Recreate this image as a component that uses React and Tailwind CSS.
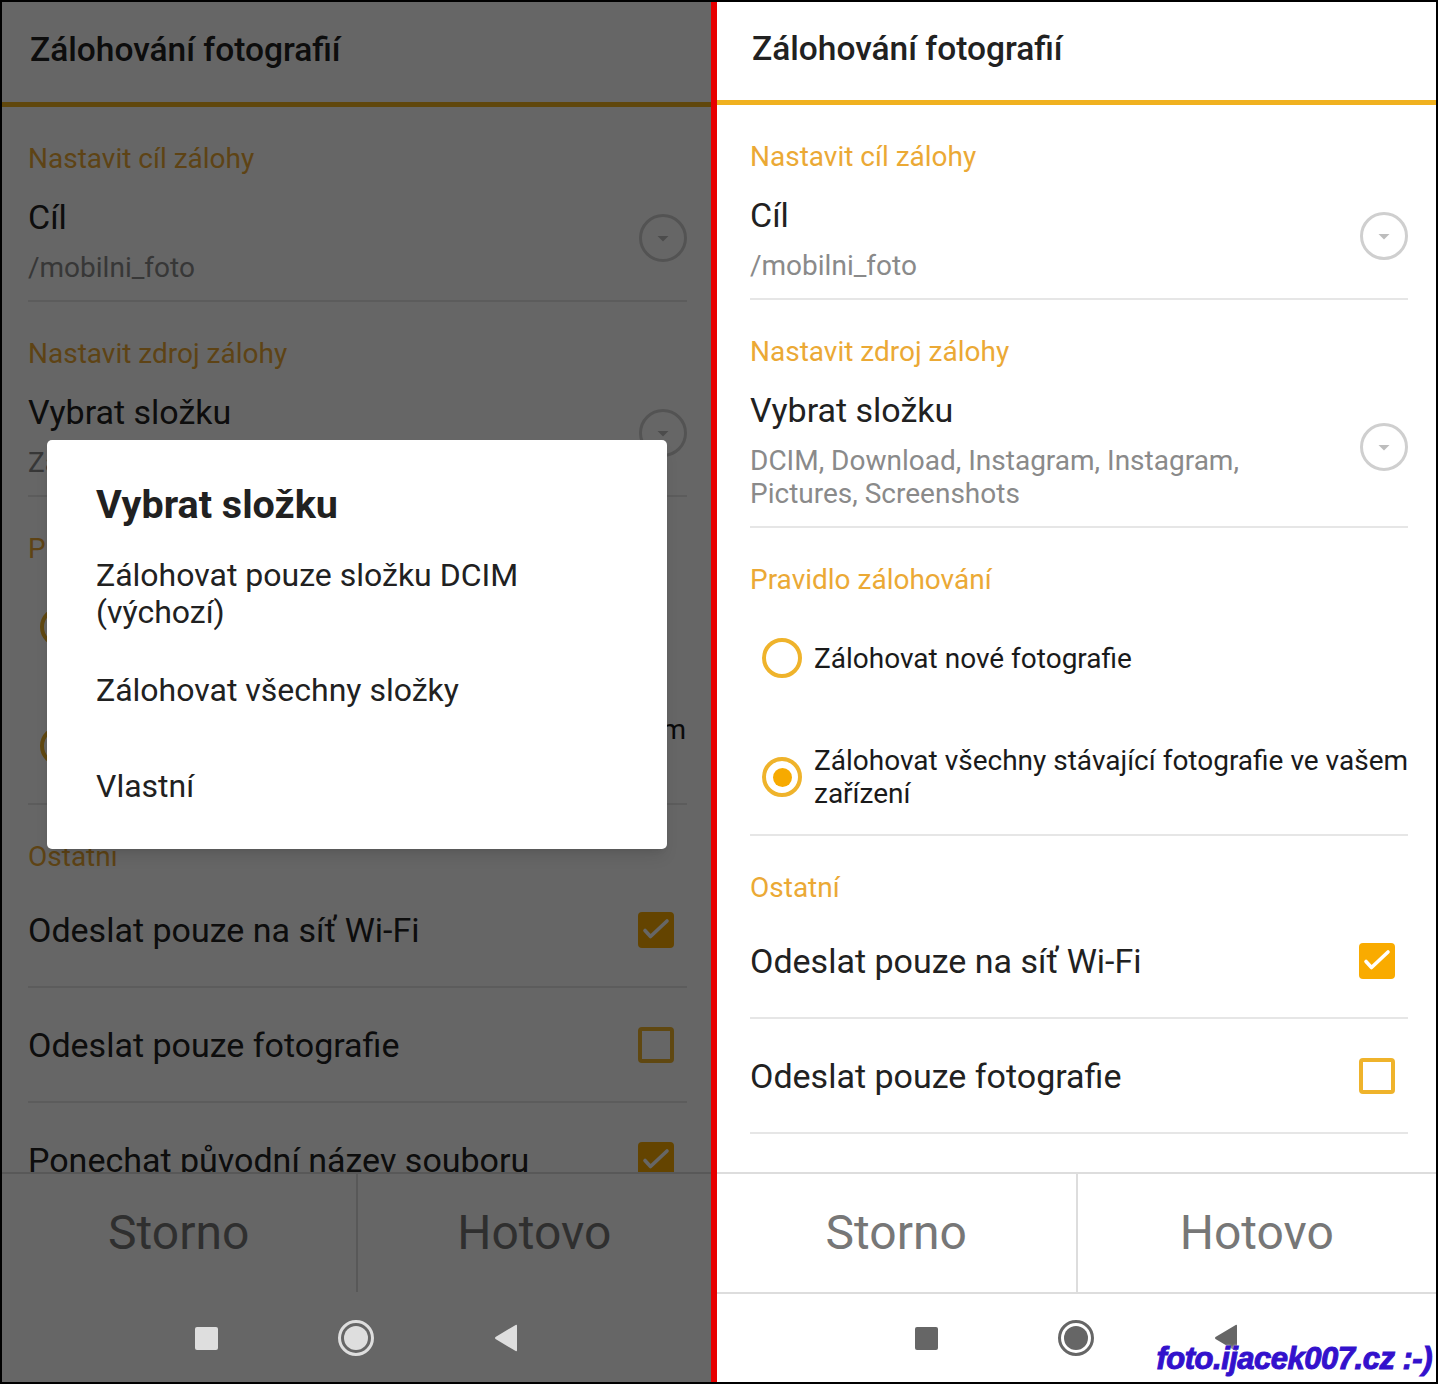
import React from 'react';

function DropCircle() {
  return (
    <svg width="48" height="48" viewBox="0 0 48 48" className="shrink-0">
      <circle cx="24" cy="24" r="22.5" fill="none" stroke="#cfcfcf" strokeWidth="3" />
      <path d="M18.5 22h11l-5.5 5.5z" fill="#bdbdbd" />
    </svg>
  );
}

function Radio({ checked }) {
  return (
    <span className="ml-[12px] flex h-[40px] w-[40px] shrink-0 items-center justify-center rounded-full border-[4px] border-[#efb32b]">
      {checked && <span className="h-[19px] w-[19px] rounded-full bg-[#f7aa00]" />}
    </span>
  );
}

function Checkbox({ checked }) {
  if (!checked) {
    return <span className="mr-[13px] h-[36px] w-[36px] shrink-0 rounded-[4px] border-[4px] border-[#efb32b]" />;
  }
  return (
    <span className="mr-[13px] flex h-[36px] w-[36px] shrink-0 items-center justify-center rounded-[4px] bg-[#f9ab00]">
      <svg width="36" height="36" viewBox="0 0 36 36">
        <path d="M7 18.5l5.5 6L29 9" fill="none" stroke="white" strokeWidth="3.6" strokeLinecap="round" strokeLinejoin="round" />
      </svg>
    </span>
  );
}

function Category({ children }) {
  return <div className="pt-[36px] text-[28px] leading-[32px] text-[#eba935]">{children}</div>;
}

function Divider() {
  return <div className="h-[2px] bg-[#e6e6e6]" />;
}

function PrefRow({ title, children }) {
  return (
    <div className="flex items-center">
      <div className="min-w-0 flex-1 pb-[16px]">
        <div className="mt-[22px] text-[34px] leading-[40px] text-[#212121]">{title}</div>
        <div className="mt-[14px] text-[28px] leading-[33px] text-[#8a8a8a]">{children}</div>
      </div>
      <DropCircle />
    </div>
  );
}

function RadioRow({ checked, height, children }) {
  return (
    <div className={`flex items-center ${height}`}>
      <Radio checked={checked} />
      <div className="ml-[12px] text-[28px] leading-[33px] text-[#1a1a1a]">{children}</div>
    </div>
  );
}

function CheckRow({ checked, children }) {
  return (
    <div className="flex h-[113px] items-center justify-between">
      <span className="whitespace-nowrap text-[34px] leading-[40px] text-[#212121]">{children}</span>
      <Checkbox checked={checked} />
    </div>
  );
}

function NavBar({ dim }) {
  const c = dim ? 'bg-[#dedede]' : 'bg-[#666666]';
  const stroke = dim ? '#dedede' : '#666666';
  return (
    <div
      className={`flex h-[90px] shrink-0 items-center justify-center gap-[119px] border-t-2 ${
        dim ? 'border-[#666666] bg-[#666666]' : 'border-[#dddddd] bg-white'
      }`}
    >
      <span className={`h-[23px] w-[23px] rounded-[2px] ${c}`} />
      <svg width="38" height="38" viewBox="0 0 38 38">
        <circle cx="19" cy="19" r="16.5" fill="none" stroke={stroke} strokeWidth="3" />
        <circle cx="19" cy="19" r="12" fill={stroke} />
      </svg>
      <svg width="24" height="28" viewBox="0 0 24 28">
        <path d="M23 1.5v25c0 .8-.7 1-1.3.6L1.5 15c-.6-.5-.6-1.5 0-2L21.7.9c.6-.4 1.3-.2 1.3.6z" fill={stroke} />
      </svg>
    </div>
  );
}

function Screen({ left }) {
  const pad = left ? 'pl-[26px] pr-[24px]' : 'pl-[33px] pr-[28px]';
  return (
    <>
      <div className="flex min-h-0 flex-1 flex-col">
        <div
          className={`flex shrink-0 items-center border-b-[5px] border-[#f0b120] bg-white pb-[4px] ${
            left ? 'h-[105px] pl-[28px]' : 'h-[103px] pl-[35px]'
          }`}
        >
          <span className="text-[33.5px] font-medium text-[#212121]">Zálohování fotografií</span>
        </div>

        <div className={`min-h-0 flex-1 overflow-hidden bg-white ${pad}`}>
          <Category>Nastavit cíl zálohy</Category>
          <PrefRow title="Cíl">/mobilni_foto</PrefRow>
          <Divider />

          <Category>Nastavit zdroj zálohy</Category>
          {left ? (
            <PrefRow title="Vybrat složku">
              <span className="whitespace-nowrap">Zálohovat pouze složku DCIM (výchozí)</span>
            </PrefRow>
          ) : (
            <PrefRow title="Vybrat složku">
              <span className="whitespace-nowrap">DCIM, Download, Instagram, Instagram,</span>
              <br />
              <span className="whitespace-nowrap">Pictures, Screenshots</span>
            </PrefRow>
          )}
          <Divider />

          <Category>Pravidlo zálohování</Category>
          <RadioRow height="h-[124px]">Zálohovat nové fotografie</RadioRow>
          <RadioRow checked height="h-[114px]">
            <span className="whitespace-nowrap">Zálohovat všechny stávající fotografie ve vašem</span>
            <br />
            zařízení
          </RadioRow>
          <Divider />

          <Category>Ostatní</Category>
          <CheckRow checked>Odeslat pouze na síť Wi-Fi</CheckRow>
          <Divider />
          <CheckRow>Odeslat pouze fotografie</CheckRow>
          <Divider />
          <CheckRow checked>Ponechat původní název souboru</CheckRow>
          <Divider />
        </div>

        <div className="flex h-[120px] shrink-0 border-t-2 border-[#dddddd] bg-white">
          <div className="flex flex-1 items-center justify-center text-[48px] text-[#777777]">Storno</div>
          <div className="w-[2px] bg-[#dddddd]" />
          <div className="flex flex-1 items-center justify-center text-[48px] text-[#777777]">Hotovo</div>
        </div>
      </div>
      <NavBar dim={left} />
    </>
  );
}

function FolderDialog() {
  const items = ['Zálohovat všechny složky', 'Vlastní'];
  return (
    <div className="absolute left-[45px] top-[438px] w-[620px] rounded-[5px] bg-white pb-[15px] pl-[49px] pt-[43px] shadow-lg">
      <div className="text-[39.5px] font-bold leading-[44px] text-[#212121]">Vybrat složku</div>
      <div className="mt-[19px] flex h-[96px] items-center text-[32px] leading-[37px] text-[#212121]">
        <div>
          Zálohovat pouze složku DCIM
          <br />
          (výchozí)
        </div>
      </div>
      {items.map((t) => (
        <div key={t} className="flex h-[96px] items-center text-[32px] leading-[37px] text-[#212121]">
          {t}
        </div>
      ))}
    </div>
  );
}

export default function App() {
  return (
    <div className="relative flex h-[1384px] w-[1438px] border-2 border-black bg-white font-[Roboto,'Noto_Sans',sans-serif]">
      <div className="relative flex h-full w-[709px] shrink-0 flex-col">
        <Screen left />
        <div className="absolute inset-x-0 top-0 bottom-[90px] bg-black/60" />
        <FolderDialog />
      </div>

      <div className="w-[6px] shrink-0 bg-[#e60000]" />

      <div className="flex h-full min-w-0 flex-1 flex-col">
        <Screen />
      </div>

      <div className="absolute bottom-[0px] right-[4px] font-['Liberation_Sans',sans-serif] text-[31px] font-bold italic tracking-[-0.5px] text-[#3311cc] [-webkit-text-stroke:1px_#3311cc] [text-shadow:0_0_2px_white,0_0_3px_white]">
        foto.ijacek007.cz :-)
      </div>
    </div>
  );
}
